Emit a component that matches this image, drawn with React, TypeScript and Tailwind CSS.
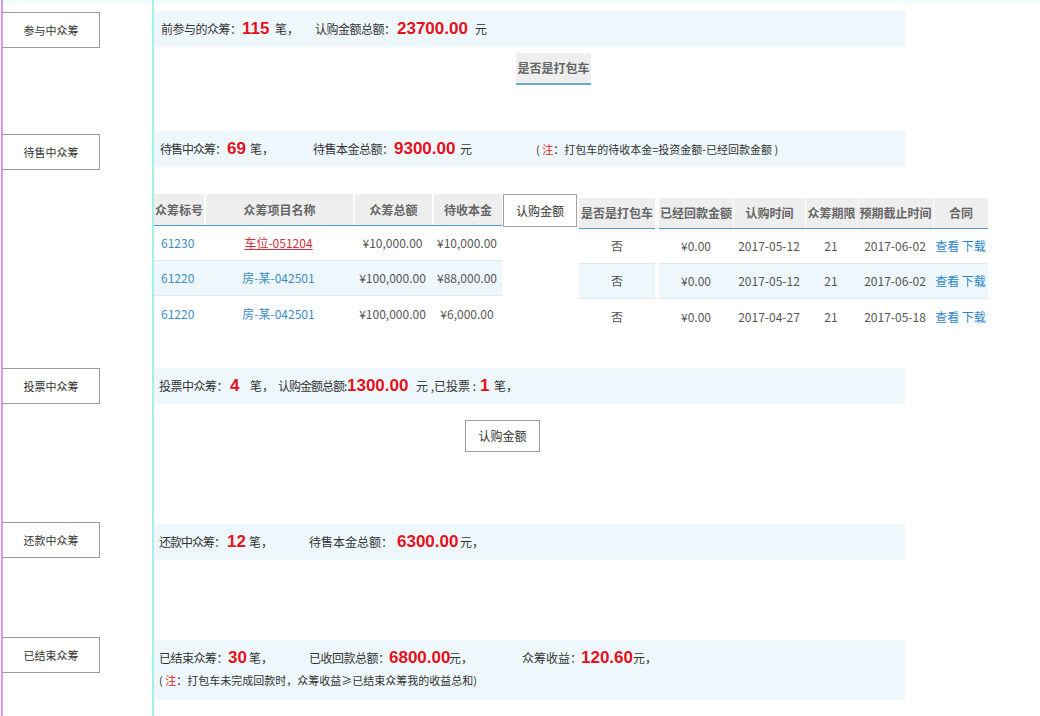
const leftCols = [
  { title: '众筹标号', w: 'w-[50px]' },
  { title: '众筹项目名称', w: 'w-[149px]' },
  { title: '众筹总额', w: 'w-[79px]' },
  { title: '待收本金', w: 'w-[70px]' },
];

const leftRows = [
  { id: '61230', name: '车位-051204', hot: true, total: '¥10,000.00', rest: '¥10,000.00' },
  { id: '61220', name: '房-某-042501', hot: false, total: '¥100,000.00', rest: '¥88,000.00' },
  { id: '61220', name: '房-某-042501', hot: false, total: '¥100,000.00', rest: '¥6,000.00' },
];

const rightCols = [
  { title: '已经回款金额', w: 'w-[74px]' },
  { title: '认购时间', w: 'w-[72px]' },
  { title: '众筹期限', w: 'w-[52px]' },
  { title: '预期截止时间', w: 'w-[76px]' },
  { title: '合同', w: 'w-[55px]' },
];

const rightRows = [
  ['¥0.00', '2017-05-12', '21', '2017-06-02'],
  ['¥0.00', '2017-05-12', '21', '2017-06-02'],
  ['¥0.00', '2017-04-27', '21', '2017-05-18'],
];

function SideLabel({ text, className }: { text: string; className: string }) {
  return (
    <div
      className={`flex h-[36px] w-[97px] items-center justify-center border-y border-r border-[#9a9a9a] text-[11px] text-[#333] ${className}`}
    >
      {text}
    </div>
  );
}

function Num({ children }: { children: React.ReactNode }) {
  return (
    <span className="font-['Liberation_Sans',Arial,sans-serif] text-[17px] font-bold text-[#e5121c]">
      {children}
    </span>
  );
}

function Note({ children }: { children: React.ReactNode }) {
  return (
    <span className="text-[11px] text-[#333]">
      ( <span className="text-[#e5121c]">注</span>：{children}
    </span>
  );
}

export default function App() {
  return (
    <div className="flex min-h-[716px] w-[1040px] bg-white font-['Noto_Sans_CJK_SC',sans-serif] text-[12px] text-[#333] shadow-[inset_0_3px_0_#effcfc]">
      <div className="w-px shrink-0" />

      {/* left labels */}
      <div className="flex w-[153px] shrink-0 flex-col border-x-2 border-l-[#d69ae8] border-r-[#a6efe9]">
        <SideLabel text="参与中众筹" className="mt-[12px]" />
        <SideLabel text="待售中众筹" className="mt-[86px]" />
        <SideLabel text="投票中众筹" className="mt-[198px]" />
        <SideLabel text="还款中众筹" className="mt-[118px]" />
        <SideLabel text="已结束众筹" className="mt-[79px]" />
      </div>

      {/* content */}
      <div className="flex flex-1 flex-col">
        <div className="mt-[11px] flex h-[36px] w-[751px] items-center whitespace-nowrap bg-[#eef8fc] pl-[7px]">
          <span className="w-[81px] tracking-[-0.5px]">前参与的众筹：</span>
          <span className="w-[33px]"><Num>115</Num></span>
          <span className="w-[40px]">笔，</span>
          <span className="w-[82px] tracking-[-0.5px]">认购金额总额：</span>
          <span className="w-[78px]"><Num>23700.00</Num></span>
          <span>元</span>
        </div>

        <div className="ml-[362px] mt-[6px] flex h-[32px] w-[75px] items-center justify-center border-b-2 border-[#6aa9cc] bg-[#eeeeee] font-bold text-[#666]">
          是否是打包车
        </div>

        <div className="mt-[46px] flex h-[36px] w-[751px] items-center whitespace-nowrap bg-[#eef8fc] pl-[6px]">
          <span className="w-[67px] tracking-[-1px]">待售中众筹：</span>
          <span className="w-[23px]"><Num>69</Num></span>
          <span className="w-[63px]">笔，</span>
          <span className="w-[81px] tracking-[-0.5px]">待售本金总额：</span>
          <span className="w-[66px]"><Num>9300.00</Num></span>
          <span className="w-[76px]">元</span>
          <Note>打包车的待收本金=投资金额-已经回款金额 )</Note>
        </div>

        {/* table */}
        <div className="mt-[27px] flex h-[141px] items-start">
          <div className="flex flex-col">
            <div className="flex h-[32px] border-b border-[#4b9fd0] bg-[#eeeeee] font-bold text-[#666]">
              {leftCols.map((c, i) => (
                <div
                  key={c.title}
                  className={`${c.w} flex items-center justify-center ${i > 0 ? 'border-l-2 border-white' : ''}`}
                >
                  {c.title}
                </div>
              ))}
            </div>
            {leftRows.map((r, i) => (
              <div
                key={i}
                className={`flex h-[35px] items-center text-[#555] ${i === 1 ? 'bg-[#eef8fc]' : ''} ${i < 2 ? 'border-b border-[#dfe8ee]' : ''}`}
              >
                <div className="w-[50px] pl-[7px] text-[#3d8cc6]">{r.id}</div>
                <div className="w-[149px] text-center">
                  {r.hot ? (
                    <span className="text-[#cc3340] underline">{r.name}</span>
                  ) : (
                    <span className="text-[#3d8cc6]">{r.name}</span>
                  )}
                </div>
                <div className="w-[79px] text-center">{r.total}</div>
                <div className="w-[70px] text-center">{r.rest}</div>
              </div>
            ))}
          </div>

          <div className="ml-px flex h-[33px] w-[74px] items-center justify-center border border-[#a0a0a0] text-[#333]">
            认购金额
          </div>

          <div className="ml-[2px] mt-[4px] flex gap-[4px]">
            <div className="flex w-[76px] flex-col">
              <div className="flex h-[31px] items-center justify-center border-b border-[#4b9fd0] bg-[#eeeeee] font-bold text-[#666]">
                是否是打包车
              </div>
              {rightRows.map((_, i) => (
                <div
                  key={i}
                  className={`flex h-[35px] items-center justify-center text-[#555] ${i === 1 ? 'bg-[#eef8fc]' : ''} ${i < 2 ? 'border-b border-[#dfe8ee]' : ''}`}
                >
                  否
                </div>
              ))}
            </div>
            <div className="flex flex-col">
              <div className="flex h-[31px] border-b border-[#4b9fd0] bg-[#eeeeee] font-bold text-[#666]">
                {rightCols.map((c, i) => (
                  <div
                    key={c.title}
                    className={`${c.w} flex items-center justify-center ${i > 0 ? 'border-l border-white' : ''}`}
                  >
                    {c.title}
                  </div>
                ))}
              </div>
              {rightRows.map((r, i) => (
                <div
                  key={i}
                  className={`flex h-[35px] items-center text-[#555] ${i === 1 ? 'bg-[#eef8fc]' : ''} ${i < 2 ? 'border-b border-[#dfe8ee]' : ''}`}
                >
                  <div className="w-[74px] text-center">{r[0]}</div>
                  <div className="w-[72px] text-center">{r[1]}</div>
                  <div className="w-[52px] text-center">{r[2]}</div>
                  <div className="w-[76px] text-center">{r[3]}</div>
                  <div className="w-[55px] text-center text-[#2b87cc]">查看 下载</div>
                </div>
              ))}
            </div>
          </div>
        </div>

        <div className="mt-[33px] flex h-[36px] w-[751px] items-center whitespace-nowrap bg-[#eef8fc] pl-[5px]">
          <span className="w-[71px] tracking-[-0.5px]">投票中众筹：</span>
          <span className="w-[20px]"><Num>4</Num></span>
          <span className="w-[28px]">笔，</span>
          <span className="w-[69px] tracking-[-1px]">认购金额总额:</span>
          <span className="w-[69px]"><Num>1300.00</Num></span>
          <span className="w-[64px]">元 ,已投票 :</span>
          <span className="w-[14px]"><Num>1</Num></span>
          <span>笔，</span>
        </div>

        <div className="ml-[311px] mt-[16px] flex h-[32px] w-[75px] items-center justify-center border border-[#9a9a9a] text-[#333]">
          认购金额
        </div>

        <div className="mt-[72px] flex h-[36px] w-[751px] items-center whitespace-nowrap bg-[#eef8fc] pl-[5px]">
          <span className="w-[68px] tracking-[-1px]">还款中众筹：</span>
          <span className="w-[22px]"><Num>12</Num></span>
          <span className="w-[60px]">笔，</span>
          <span className="w-[88px]">待售本金总额：</span>
          <span className="w-[63px]"><Num>6300.00</Num></span>
          <span>元，</span>
        </div>

        <div className="mt-[80px] flex h-[60px] w-[751px] flex-col whitespace-nowrap bg-[#eef8fc] pl-[5px] pt-[8px]">
          <div className="flex h-[20px] items-center">
            <span className="w-[69px] tracking-[-0.5px]">已结束众筹：</span>
            <span className="w-[21px]"><Num>30</Num></span>
            <span className="w-[60px]">笔，</span>
            <span className="w-[80px] tracking-[-0.5px]">已收回款总额：</span>
            <span className="w-[60px]"><Num>6800.00</Num></span>
            <span className="w-[73px]">元，</span>
            <span className="w-[59px]">众筹收益：</span>
            <span className="w-[52px]"><Num>120.60</Num></span>
            <span>元，</span>
          </div>
          <div className="mt-[4px] flex h-[16px] items-center">
            <Note>打包车未完成回款时，众筹收益≥已结束众筹我的收益总和)</Note>
          </div>
        </div>
      </div>
    </div>
  );
}
